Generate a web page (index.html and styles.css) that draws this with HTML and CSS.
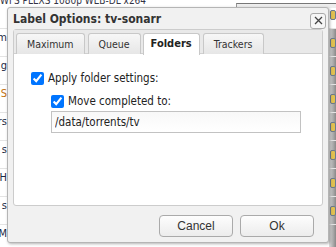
FILE: index.html
```html
<!DOCTYPE html>
<html lang="en">
<head>
    <meta charset="UTF-8">
    <title>Label Options</title>
    <link rel="stylesheet" href="styles.css">
</head>
<body>
    <div class="page">
        <div class="topbar">
            <span class="top-text">WFS PLEXS 1080p WEB-DL x264</span>
            <span class="top-line"></span>
        </div>
        <ul class="rows">
            <li><span class="name">m</span><span class="ico"></span></li>
            <li><span class="name">g</span><span class="ico"></span></li>
            <li><span class="name orange">S</span><span class="ico"></span></li>
            <li><span class="name">rs</span><span class="ico"></span></li>
            <li><span class="name">s</span><span class="ico"></span></li>
            <li><span class="name">H</span><span class="ico"></span></li>
            <li><span class="name">s</span><span class="ico"></span></li>
            <li><span class="name">M</span><span class="ico"></span></li>
        </ul>
    </div>

    <div class="dialog">
        <div class="titlebar">
            <span class="title">Label Options: tv-sonarr</span>
            <button class="close" title="close">
                <svg width="9" height="9" viewBox="0 0 9 9"><path d="M1 1 L8 8 M8 1 L1 8" stroke="#444" stroke-width="1.3"/></svg>
            </button>
        </div>
        <div class="tabs">
            <ul class="tab-nav">
                <li>Maximum</li>
                <li>Queue</li>
                <li class="active">Folders</li>
                <li>Trackers</li>
            </ul>
            <div class="tab-panel">
                <label class="check">
                    <input type="checkbox" checked>
                    <span>Apply folder settings:</span>
                </label>
                <div class="sub">
                    <label class="check">
                        <input type="checkbox" checked>
                        <span>Move completed to:</span>
                    </label>
                    <input type="text" class="path" value="/data/torrents/tv">
                </div>
            </div>
        </div>
        <div class="buttons">
            <button class="btn">Cancel</button>
            <button class="btn">Ok</button>
        </div>
    </div>
</body>
</html>
```
FILE: styles.css
```css
*{
    margin:0;
    padding:0;
    box-sizing: border-box;
}
body{
    width:336px;
    height:247px;
    overflow:hidden;
    background:#fff;
    font-family: "DejaVu Sans Condensed", "DejaVu Sans", sans-serif;
    position: relative;
}
/* page behind the dialog */
.topbar{
    height:8px;
    display:flex;
    align-items:center;
    overflow:hidden;
}
.top-text{
    font-size:10px;
    color:#334;
    margin-top:-8px;
    white-space:nowrap;
    width:236px;
    overflow:hidden;
}
.top-line{
    flex:1;
    height:5px;
    border-top:1px solid #777;
    border-left:1px solid #999;
    background:#eee;
    margin-top:3px;
}
.rows{
    list-style:none;
    margin-top:20px;
}
.rows li{
    height:28px;
    border-top:1px solid #e4e4e4;
    display:flex;
    align-items:flex-start;
    justify-content:space-between;
}
.name{
    width:7px;
    padding-top:2px;
    white-space:nowrap;
    font-size:11px;
    color:#1c2a44;
    text-align:right;
    direction:rtl;
}
.name.orange{
    color:#c07010;
}
.ico{
    width:7px;
    height:27px;
    background:linear-gradient(to right,#ddd,#888);
    position:relative;
}
.ico:after{
    content:'';
    position:absolute;
    left:1px;
    top:-19px;
    width:4px;
    height:8px;
    border-radius:2px;
    background:#e0c050;
    border:1px solid #6a7a90;
}

/* dialog */
.dialog{
    position:absolute;
    left:7px;
    top:7px;
    width:322px;
    height:236px;
    background:#f1f1f1;
    border:1px solid #b5b5b5;
    border-radius:3px;
    box-shadow: 1px 1px 3px rgba(0,0,0,0.3);
    padding:0 5px;
    display:flex;
    flex-direction:column;
}
.titlebar{
    height:21px;
    display:flex;
    align-items:center;
    justify-content:space-between;
}
.title{
    font-weight:bold;
    font-size:12px;
    color:#333;
}
.close{
    width:16px;
    height:16px;
    border:1px solid #aaa;
    border-radius:3px;
    background:#f6f6f6;
    display:flex;
    align-items:center;
    justify-content:center;
    margin-right:-3px;
    margin-top:4px;
}
.tabs{
    border:1px solid #ccc;
    border-radius:3px;
    background:#fff;
    height:177px;
    display:flex;
    flex-direction:column;
}
.tab-nav{
    list-style:none;
    display:flex;
    gap:3px;
    background:#e9e9e9;
    padding:3px 2px 0;
    border-bottom:1px solid #d0d0d0;
    height:24px;
}
.tab-nav li{
    font-size:10.5px;
    color:#333;
    padding:0 10px;
    height:21px;
    line-height:20px;
    border:1px solid #c8c8c8;
    border-bottom:none;
    border-radius:3px 3px 0 0;
    background:linear-gradient(#f7f7f7,#e6e6e6);
}
.tab-nav li.active{
    background:#fff;
    font-weight:bold;
    font-size:11px;
    color:#222;
    height:22px;
    padding:0 7px;
    margin-left:-1px;
}
.tab-panel{
    flex:1;
    padding:17px 17px;
}
.check{
    display:flex;
    align-items:center;
    gap:4px;
    font-size:11.5px;
    color:#222;
}
.check input{
    width:13px;
    height:13px;
    margin:0;
}
.sub{
    padding-left:20px;
    margin-top:9px;
}
.path{
    display:block;
    margin-top:3px;
    width:250px;
    height:22px;
    border:1px solid #c2c2c2;
    background:linear-gradient(#f8f8f8,#fff);
    font-family:inherit;
    font-size:11.5px;
    color:#222;
    padding:0 3px;
    outline:none;
}
.buttons{
    display:flex;
    justify-content:flex-end;
    gap:7px;
    padding:9px 9px 0 0;
}
.btn{
    width:74px;
    height:22px;
    border:1px solid #aaa;
    border-radius:4px;
    background:linear-gradient(#fdfdfd,#ececec);
    font-family:"Liberation Sans", Arial, sans-serif;
    font-size:12px;
    color:#333;
}
```
